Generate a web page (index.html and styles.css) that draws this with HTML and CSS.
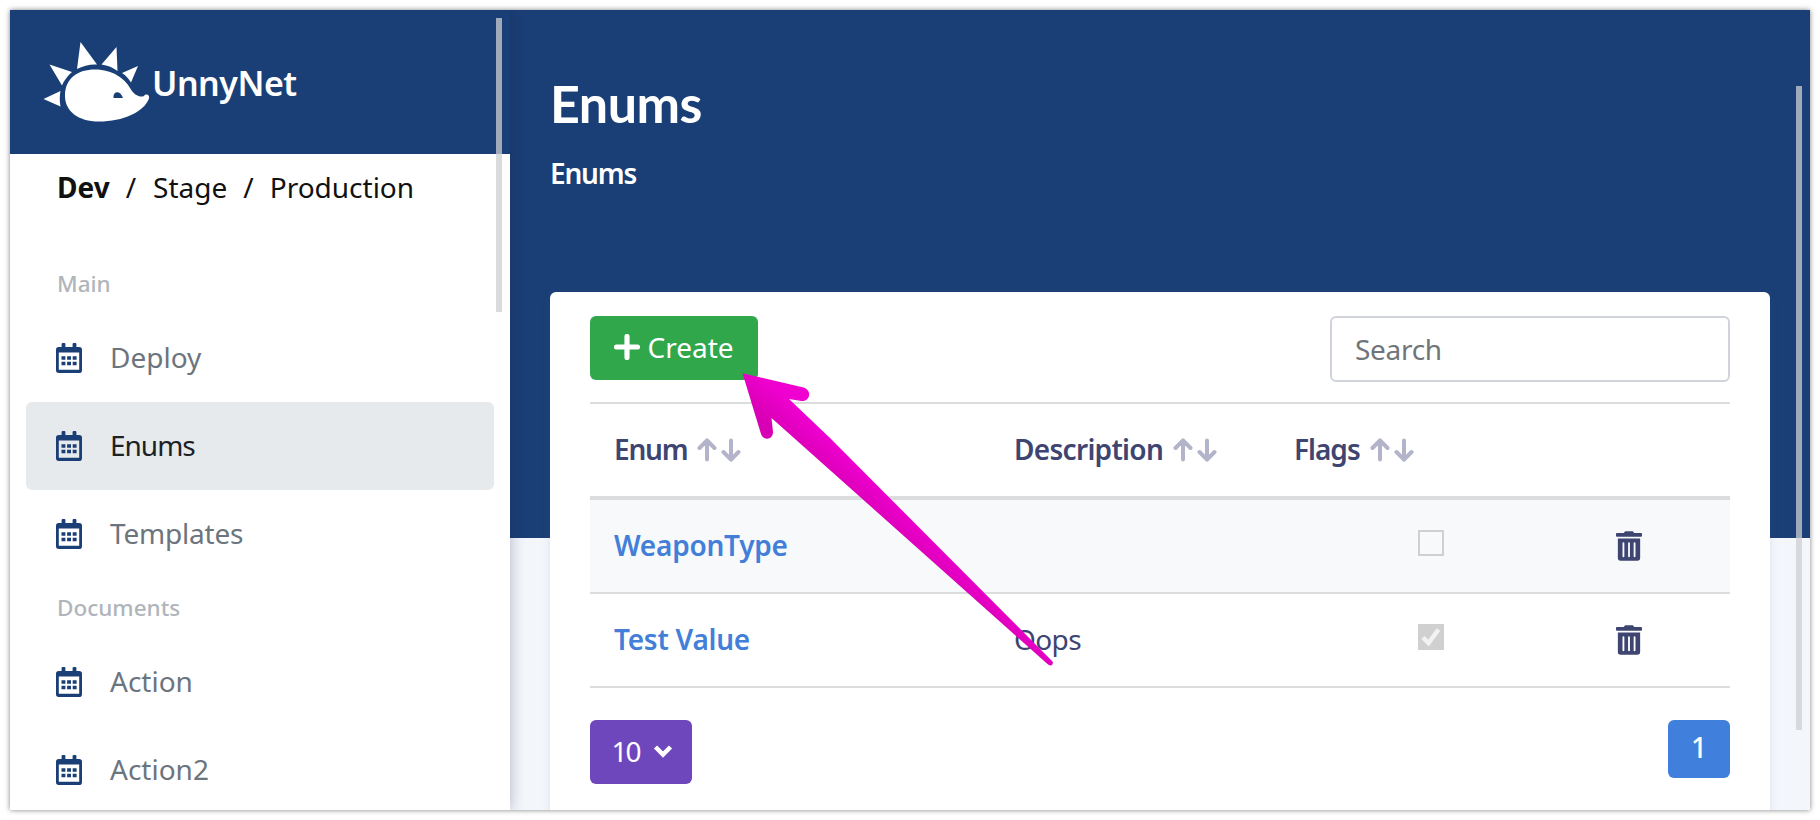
FILE: index.html
```html
<!DOCTYPE html>
<html lang="en">
<head>
<meta charset="utf-8">
<title>UnnyNet</title>
<link rel="stylesheet" href="styles.css">
</head>
<body>
<svg class="sprite" aria-hidden="true">
  <symbol id="calendar" viewBox="0 0 26 30">
    <path fill-rule="evenodd" d="M5.6 1a1 1 0 0 1 1-1h1.8a1 1 0 0 1 1 1v3h7.2v-3a1 1 0 0 1 1-1h1.800a1 1 0 0 1 1 1v3h2.800a2.800 2.800 0 0 1 2.800 2.800v20.400a2.800 2.800 0 0 1-2.800 2.800h-20.400a2.800 2.800 0 0 1-2.800-2.800v-20.400a2.800 2.800 0 0 1 2.800-2.800h2.800zM2.800 9.600v17.200h20.400v-17.200z"/>
    <path d="M5.500 13.200h3.900v3.500h-3.900zM11.100 13.200h3.900v3.500h-3.900zM16.700 13.200h3.900v3.500h-3.900zM5.500 18.800h3.900v3.500h-3.900zM11.100 18.800h3.900v3.500h-3.900zM16.700 18.800h3.900v3.500h-3.900z"/>
  </symbol>
  <symbol id="trash" viewBox="0 0 448 512">
    <path d="M32 464a48 48 0 0 0 48 48h288a48 48 0 0 0 48-48V128H32zm272-256a16 16 0 0 1 32 0v224a16 16 0 0 1-32 0zm-96 0a16 16 0 0 1 32 0v224a16 16 0 0 1-32 0zm-96 0a16 16 0 0 1 32 0v224a16 16 0 0 1-32 0zM432 32H312l-9.400-18.700A24 24 0 0 0 281.100 0H166.800a23.720 23.720 0 0 0-21.400 13.300L136 32H16A16 16 0 0 0 0 48v32a16 16 0 0 0 16 16h416a16 16 0 0 0 16-16V48a16 16 0 0 0-16-16z"/>
  </symbol>
  <symbol id="sort" viewBox="0 0 44 24">
    <path d="M10 21.500V3M2.500 10L10 2.300L17.500 10M34 2.500V21M26.500 14L34 21.700L41.500 14"/>
  </symbol>
</svg>

<div class="window">
  <aside class="sidebar">
    <div class="brand">
      <svg class="brand-logo" viewBox="0 0 110 82" aria-hidden="true">
        <path d="M24 54C24 36 37 27.500 54 27.500C72 27.500 84 37 89 46C93 53 99 56 103 54C105 51 109 53 108 56.500C103 70 82 79.500 58 79.500C37 79.500 24 69 24 54Z"/>
        <path d="M36 27L39.500 0L56 22.500C49 22 42 24 36 27ZM60.500 22.500L75.500 5L76.500 29C72 25.500 67 23.500 60.500 22.500ZM81 31L97 24L90 40.500C88 37 85 33.500 81 31ZM8.500 22.500L31 30C26.500 34 23 38.500 21 43.500ZM2.500 57L19.500 49C18.500 54 18.500 59 19.500 64.500Z"/>
        <path class="brand-eye" d="M72.500 56V54C73 49 79.500 48.500 82 56Z"/>
      </svg>
      <span class="brand-name">UnnyNet</span>
    </div>
    <nav class="envs"><b>Dev</b><span>/</span><a class="stage">Stage</a><span>/</span><a>Production</a></nav>
    <h6 class="group">Main</h6>
    <a class="item"><svg class="item-icon"><use href="#calendar"/></svg><span>Deploy</span></a>
    <a class="item active"><svg class="item-icon"><use href="#calendar"/></svg><span class="tight">Enums</span></a>
    <a class="item"><svg class="item-icon"><use href="#calendar"/></svg><span class="templates">Templates</span></a>
    <h6 class="group">Documents</h6>
    <a class="item"><svg class="item-icon"><use href="#calendar"/></svg><span>Action</span></a>
    <a class="item"><svg class="item-icon"><use href="#calendar"/></svg><span>Action2</span></a>
    <div class="thumb thumb-side"></div>
  </aside>

  <main class="main">
    <h1 class="title">Enums</h1>
    <p class="crumb">Enums</p>
    <section class="card">
      <div class="toolbar">
        <button class="btn create"><svg class="plus" viewBox="0 0 26 26"><path d="M13 2.500v21M2.500 13h21"/></svg><span>Create</span></button>
        <input class="search" placeholder="Search">
      </div>
      <div class="table">
        <div class="row head">
          <div class="cell"><span class="enum">Enum</span><svg class="sort"><use href="#sort"/></svg></div>
          <div class="cell"><span class="desc">Description</span><svg class="sort"><use href="#sort"/></svg></div>
          <div class="cell"><span class="flags">Flags</span><svg class="sort"><use href="#sort"/></svg></div>
          <div class="cell"></div>
        </div>
        <div class="row striped">
          <div class="cell link"><span>WeaponType</span></div>
          <div class="cell"></div>
          <div class="cell center"><i class="check"></i></div>
          <div class="cell"><svg class="trash"><use href="#trash"/></svg></div>
        </div>
        <div class="row">
          <div class="cell link"><span>Test Value</span></div>
          <div class="cell oops"><span>Oops</span></div>
          <div class="cell center"><i class="check checked"><svg viewBox="0 0 26 26"><path d="M5 13.500L10.500 19L20.500 5.500"/></svg></i></div>
          <div class="cell"><svg class="trash"><use href="#trash"/></svg></div>
        </div>
      </div>
      <div class="footer">
        <button class="btn size"><span>10</span><svg class="caret" viewBox="0 0 20 14"><path d="M2.500 3L10 10.500L17.500 3"/></svg></button>
        <button class="btn page"><span>1</span></button>
      </div>
    </section>
    <div class="thumb thumb-main"></div>
  </main>
</div>

<svg class="pointer" viewBox="0 0 320 300" aria-hidden="true">
  <defs>
    <linearGradient id="shade" gradientUnits="userSpaceOnUse" x1="52" y1="32" x2="30" y2="56">
      <stop offset="0" stop-color="#f000d0"/><stop offset="1" stop-color="#d800b4"/>
    </linearGradient>
  </defs>
  <path d="M2.500 3.300L63.500 17.500C72.500 20.500 70 31.500 61.500 31L49 29L90 68L312.500 291.500Q313.500 294 311.500 295.200Q309.500 296 307.500 294L31.500 48L33 62C33 70 23.500 71 21 64Z"/>
</svg>
</body>
</html>
```
FILE: styles.css
```css
* { box-sizing: border-box; }

body {
  margin: 0;
  width: 1820px;
  height: 820px;
  padding: 10px;
  overflow: hidden;
  background: #fff;
  font: 400 28px/42px "Noto Sans", sans-serif;
  color: #3e4571;
}

h1, h6, p { margin: 0; }
button, input { font: inherit; border: 0; }
.sprite { display: none; }

.window {
  display: flex;
  width: 1800px;
  height: 800px;
  overflow: hidden;
  background: #f3f6fb;
  box-shadow: 0 0 5px rgba(0, 0, 0, .5);
}

/* Sidebar */
.sidebar {
  position: relative;
  z-index: 1;
  flex: 0 0 500px;
  height: 800px;
  overflow: hidden;
  background: #fff;
  box-shadow: 0 0 14px rgba(20, 25, 60, .3);
}
.brand {
  display: flex;
  align-items: center;
  height: 144px;
  padding: 2px 0 0 31px;
  background: #1a3f76;
  color: #fff;
}
.brand-logo { width: 110px; height: 82px; fill: #fff; }
.brand-eye { fill: #1a3f76; }
.brand-name { font-size: 34px; font-weight: 600; letter-spacing: -.5px; margin-left: 1px; }

.envs {
  display: flex;
  gap: 16px;
  height: 100px;
  padding: 12px 0 0 47px;
  color: #111;
}
.stage { margin-left: 1px; }
.group {
  height: 60px;
  padding: 9px 0 0 47px;
  font-size: 22.500px;
  font-weight: 500;
  color: #b0b5bc;
}
.item {
  display: flex;
  align-items: center;
  height: 88px;
  margin: 0 16px;
  padding-left: 30px;
  border-radius: 6px;
  color: #6c757d;
}
.item span, .btn span, .cell span { padding-bottom: 2px; }
.item.active { background: #e7eaed; color: #1c2126; }
.item-icon { width: 26px; height: 30px; margin-right: 28px; fill: #1a3f76; }
.tight { letter-spacing: -1px; }
.templates { letter-spacing: -.2px; }

.thumb { position: absolute; width: 6px; background: rgba(205, 207, 210, .75); }
.thumb-side { left: 486px; top: 8px; height: 294px; }
.thumb-main { right: 8px; top: 76px; height: 644px; }

/* Content */
.main {
  position: relative;
  flex: 1;
  padding: 0 40px;
  background: linear-gradient(#1a3f76 528px, #f3f6fb 528px);
}
.title {
  padding-top: 59px;
  font: 700 52px/68px Lato, sans-serif;
  letter-spacing: -.5px;
  color: #fff;
}
.crumb {
  height: 155px;
  padding-top: 15px;
  font-weight: 600;
  letter-spacing: -1.200px;
  color: #fff;
}
.card {
  height: 600px;
  padding: 24px 40px;
  border-radius: 6px;
  background: #fff;
  box-shadow: 0 0 8px rgba(60, 90, 160, .12);
}
.toolbar { display: flex; justify-content: space-between; height: 86px; }

.btn {
  display: flex;
  align-items: center;
  justify-content: center;
  padding: 0;
  border-radius: 6px;
  color: #fff;
}
.create { width: 168px; height: 64px; background: #31a74c; }
.plus { width: 26px; height: 26px; margin: 0 7px 2px 0; fill: none; stroke: #fff; stroke-width: 5.200; stroke-linecap: round; }
.search {
  width: 400px;
  height: 66px;
  padding: 0 23px 1px;
  border: 2px solid #d0d3da;
  border-radius: 6px;
  background: #fff;
  letter-spacing: -.3px;
}
.search::placeholder { color: #6f7579; opacity: 1; }

.row {
  display: grid;
  grid-template-columns: 400px 280px 322px 138px;
  height: 94px;
  border-bottom: 2px solid #dadcde;
}
.head { height: 98px; border-top: 2px solid #dadcde; border-bottom-width: 4px; font-weight: 600; }
.striped { background: #f7f9fb; }
.cell { display: flex; align-items: center; padding: 0 24px; }
.center { justify-content: center; padding: 0 0 6px; }
.link { font-weight: 600; letter-spacing: -.25px; color: #437fd9; }
.enum { letter-spacing: -1.200px; }
.desc { letter-spacing: -.7px; }
.flags { letter-spacing: -1px; }
.oops { letter-spacing: -.6px; }
.sort { width: 44px; height: 24px; margin: 0 0 1px 10px; fill: none; stroke: #b3b4c9; stroke-width: 4; stroke-linecap: round; stroke-linejoin: round; }
.trash { width: 26px; height: 30px; fill: #3e4571; }
.check { width: 26px; height: 26px; border: 2px solid #d0d0d0; }
.checked { border: 0; background: #d0d0d0; }
.checked svg { display: block; width: 26px; height: 26px; fill: none; stroke: #f2f2f2; stroke-width: 4.500; }

.footer { display: flex; justify-content: space-between; padding-top: 32px; }
.size { width: 102px; height: 64px; padding-left: 2px; background: #6f47bd; letter-spacing: -2px; }
.caret { width: 20px; height: 14px; margin: 0 0 2px 13px; fill: none; stroke: #fff; stroke-width: 4.500; }
.page { width: 62px; height: 58px; background: #407fdc; font-weight: 500; }
.page span { padding-bottom: 4px; }

/* Pointer drawn over the page */
.pointer { position: absolute; left: 740px; top: 370px; z-index: 2; width: 320px; height: 300px; fill: url(#shade); }
```
